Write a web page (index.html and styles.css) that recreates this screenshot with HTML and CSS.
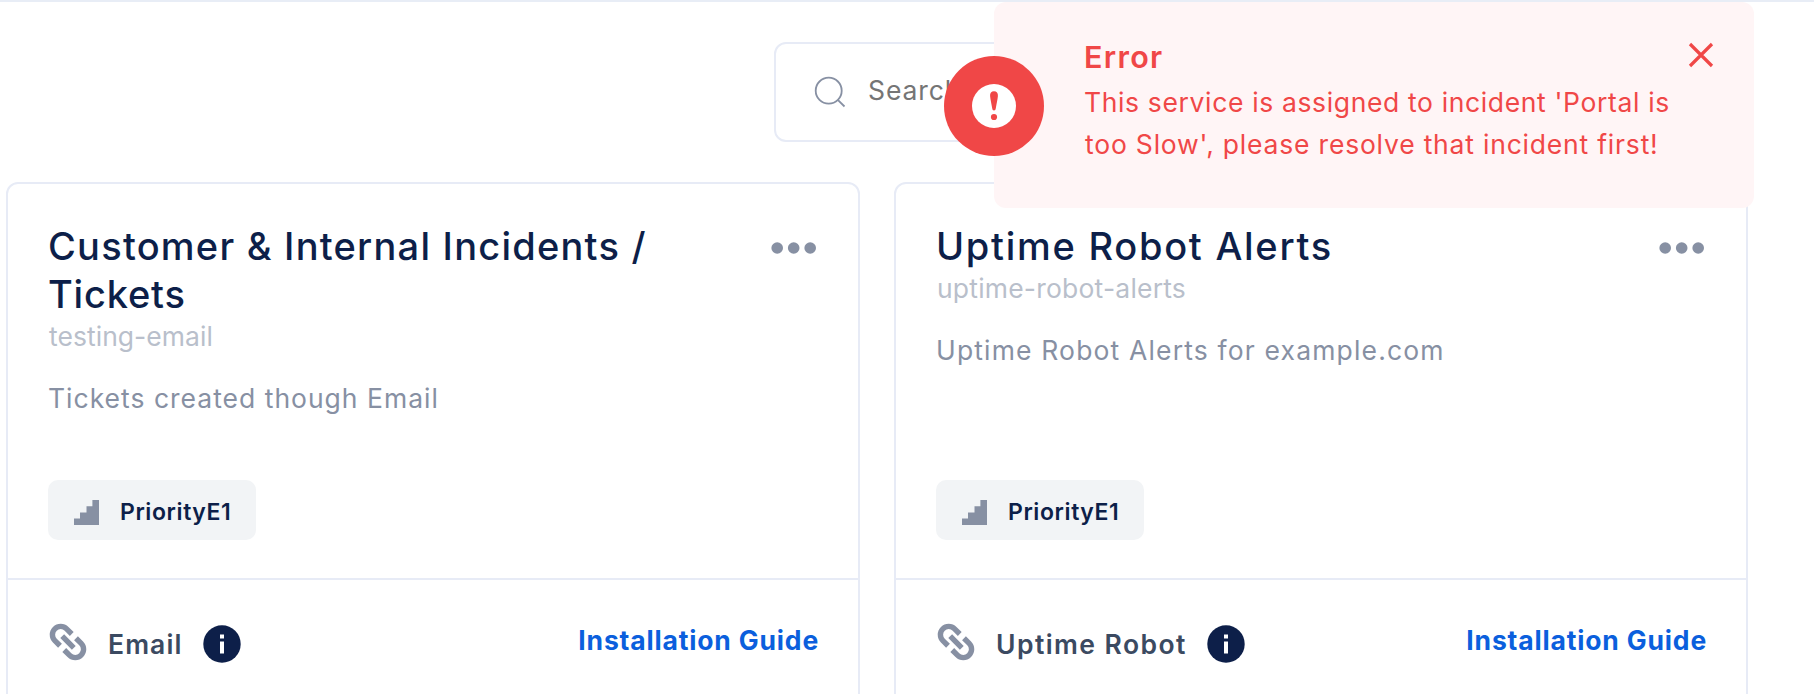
FILE: index.html
```html
<!DOCTYPE html>
<html lang="en">
<head>
<meta charset="utf-8">
<title>Services</title>
<link rel="stylesheet" href="styles.css">
</head>
<body>
<svg class="sprite" aria-hidden="true">
  <symbol id="stairs" viewBox="0 0 25 25"><path d="M0 25V18.5H6V12.5H12.5V6.2H18.4V0H25V25Z" fill="currentColor"/></symbol>
  <symbol id="dots" viewBox="0 0 46 12" fill="currentColor"><circle cx="6.2" cy="6" r="5.8"/><circle cx="22.7" cy="6" r="5.8"/><circle cx="39.2" cy="6" r="5.8"/></symbol>
  <symbol id="link" viewBox="0 0 38 38"><g transform="rotate(45 19 19)" fill="none" stroke="currentColor" stroke-width="5.4"><path d="M16 10.700H8.700a8.300 8.300 0 0 0 0 16.600H16M22 10.700H29.300a8.300 8.300 0 0 1 0 16.600H22M10.800 19H27.200"/></g></symbol>
  <symbol id="info" viewBox="0 0 38 38"><circle cx="19" cy="19" r="18.7" fill="#0d1f49"/><path d="M17 9.6H21V13.6H17ZM17 16.6H21V28.4H17Z" fill="#fff"/></symbol>
</svg>

<div class="page">
  <div class="toolbar">
    <label class="search">
      <svg class="search-icon" viewBox="0 0 32 32"><circle cx="14.7" cy="14.7" r="13" /><path d="M23.8 23.8L30.5 30.5"/></svg>
      <span class="search-text">Search</span>
    </label>
  </div>

  <div class="cards">
    <article class="card">
      <div class="card-body">
        <div class="card-head">
          <h2 class="title">Customer &amp; Internal Incidents /<br><span class="title-tail">Tickets</span></h2>
          <svg class="menu"><use href="#dots"/></svg>
        </div>
        <div class="slug slug-email">testing-email</div>
        <p class="desc">Tickets created though Email</p>
        <div class="badge"><svg class="badge-icon"><use href="#stairs"/></svg><span>PriorityE1</span></div>
      </div>
      <footer class="card-foot">
        <svg class="link-icon"><use href="#link"/></svg>
        <span class="source">Email</span>
        <svg class="info-icon"><use href="#info"/></svg>
        <a class="guide">Installation Guide</a>
      </footer>
    </article>

    <article class="card">
      <div class="card-body">
        <div class="card-head">
          <h2 class="title title-robot">Uptime Robot Alerts</h2>
          <svg class="menu"><use href="#dots"/></svg>
        </div>
        <div class="slug">uptime-robot-alerts</div>
        <p class="desc desc-robot">Uptime Robot Alerts for example.com</p>
        <div class="badge"><svg class="badge-icon"><use href="#stairs"/></svg><span>PriorityE1</span></div>
      </div>
      <footer class="card-foot">
        <svg class="link-icon"><use href="#link"/></svg>
        <span class="source source-robot">Uptime Robot</span>
        <svg class="info-icon"><use href="#info"/></svg>
        <a class="guide">Installation Guide</a>
      </footer>
    </article>
  </div>
</div>

<div class="toast" role="alert">
  <svg class="toast-icon" viewBox="0 0 100 100"><circle cx="50" cy="50" r="50" fill="#f04747"/><circle cx="50" cy="50" r="22" fill="#fff"/><path d="M50 35.200c-2.600 0-4.200 1.800-3.900 4.800c.3 3.500 1.400 8 2.100 12.300c.2 1.400.8 2.200 1.800 2.200s1.600-.8 1.800-2.200c.7-4.300 1.800-8.800 2.100-12.300c.3-3-1.300-4.800-3.900-4.800z" fill="#f04747"/><circle cx="50" cy="61" r="3.100" fill="#f04747"/></svg>
  <div class="toast-text">
    <div class="toast-title">Error</div>
    <div class="toast-line">This service is assigned to incident 'Portal is</div>
    <div class="toast-line toast-line-end">too Slow', please resolve that incident first!</div>
  </div>
  <svg class="toast-close" viewBox="0 0 26 26"><path d="M2 2L24 24M24 2L2 24"/></svg>
</div>
</body>
</html>
```
FILE: styles.css
```css
* { box-sizing: border-box; }
body {
  margin: 0;
  width: 1814px;
  height: 694px;
  overflow: hidden;
  background: #fff;
  font-family: Inter, "Liberation Sans", sans-serif;
  font-size: 26.5px;
}
.sprite { position: absolute; width: 0; height: 0; }
.page {
  height: 694px;
  border-top: 2px solid #e8edf6;
  overflow: hidden;
}
.toolbar {
  display: flex;
  justify-content: flex-end;
  padding: 40px 66px 40px 6px;
}
.search {
  display: flex;
  align-items: center;
  width: 974px;
  height: 100px;
  padding: 0 38px;
  border: 2px solid #e7ebf6;
  border-radius: 12px;
}
.search-icon {
  width: 32px;
  height: 32px;
  margin: 0 22px 1px 0;
  fill: none;
  stroke: #8790a3;
  stroke-width: 1.8;
}
.search-text {
  color: #757575;
  letter-spacing: 0.9px;
  margin-bottom: 4px;
}
.cards {
  display: grid;
  grid-template-columns: 854px 854px;
  gap: 34px;
  padding-left: 6px;
}
.card {
  display: flex;
  flex-direction: column;
  height: 524px;
  border: 2px solid #e7ebf6;
  border-radius: 12px;
}
.card-body {
  display: flex;
  flex-direction: column;
  align-items: flex-start;
  height: 394px;
  padding: 38px 40px;
}
.card-head {
  display: flex;
  justify-content: space-between;
  width: 100%;
}
.title {
  margin: 0;
  font-size: 38px;
  line-height: 48px;
  font-weight: 500;
  letter-spacing: 1.23px;
  color: #0d1f49;
  white-space: nowrap;
}
.title-tail { letter-spacing: 0.81px; }
.title-robot { letter-spacing: 1.73px; }
.menu {
  width: 46px;
  height: 12px;
  margin: 20px 1px 0 0;
  color: #8790a3;
}
.slug {
  padding-left: 1px;
  line-height: 37px;
  letter-spacing: 0.2px;
  color: #b9bfcb;
}
.slug-email { letter-spacing: 0.04px; }
.desc {
  margin: 25px 0 0;
  line-height: 36px;
  letter-spacing: 1px;
  color: #8790a3;
}
.desc-robot { letter-spacing: 1.16px; }
.badge {
  display: flex;
  align-items: center;
  width: 208px;
  height: 60px;
  margin-top: auto;
  padding-left: 26px;
  border-radius: 10px;
  background: #f2f4f6;
  font-size: 23px;
  font-weight: 600;
  letter-spacing: 0.59px;
  color: #0d1f49;
}
.badge-icon {
  width: 25px;
  height: 25px;
  margin: 5px 21px 0 0;
  color: #8790a3;
}
.badge span { line-height: 28px; margin-top: 4px; }
.card-foot {
  display: flex;
  align-items: center;
  height: 126px;
  padding: 0 39px 0 41px;
  border-top: 2px solid #e7ebf6;
}
.link-icon {
  width: 38px;
  height: 38px;
  margin-right: 21px;
  color: #8790a3;
}
.source {
  margin-top: 4px;
  font-weight: 600;
  letter-spacing: 1.1px;
  color: #3b4a61;
}
.source-robot { letter-spacing: 1.43px; }
.info-icon {
  width: 38px;
  height: 38px;
  margin: 4px 0 0 20px;
}
.guide {
  margin: -4px 0 0 auto;
  font-weight: 700;
  letter-spacing: 0.83px;
  color: #0b5fdd;
}
.toast {
  position: absolute;
  left: 994px;
  top: 2px;
  display: flex;
  width: 760px;
  height: 206px;
  padding: 35px 40px 0 90px;
  border-radius: 12px;
  background: #fff5f6;
  color: #f04747;
}
.toast-icon {
  position: absolute;
  left: -50px;
  top: 54px;
  width: 100px;
  height: 100px;
}
.toast-text { flex: 1; white-space: nowrap; }
.toast-title {
  margin-bottom: 4px;
  font-size: 30.5px;
  font-weight: 600;
  line-height: 40px;
  letter-spacing: 1.28px;
}
.toast-line { line-height: 42px; letter-spacing: 0.64px; }
.toast-line-end { padding-left: 1px; letter-spacing: 0.8px; }
.toast-close {
  width: 26px;
  height: 26px;
  margin-top: 5px;
  fill: none;
  stroke: #f04747;
  stroke-width: 3.2;
}
```
